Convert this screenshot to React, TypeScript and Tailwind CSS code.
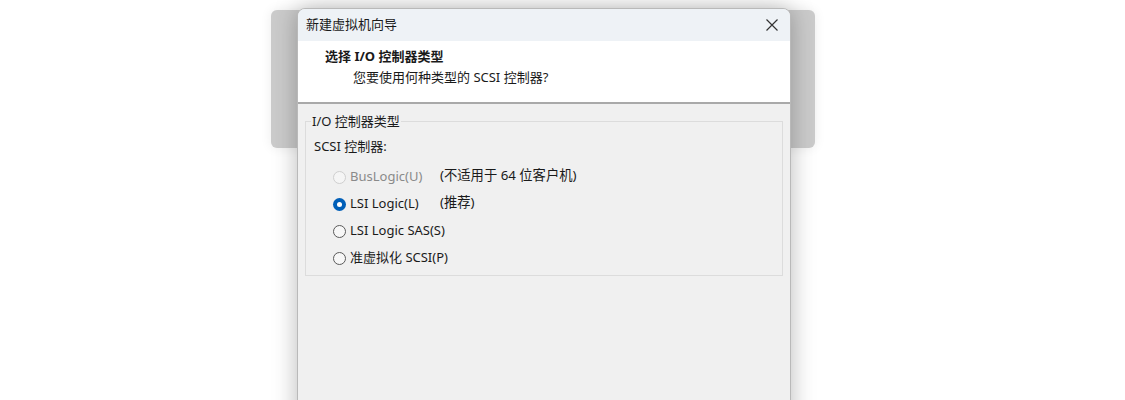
import React from "react";

const font = { fontFamily: '"Segoe UI", "Noto Sans", "Noto Sans CJK SC", sans-serif' };

function Radio({ checked, disabled }: { checked?: boolean; disabled?: boolean }) {
  if (checked) {
    return (
      <span className="w-[13px] h-[13px] rounded-full bg-[#005fb8] flex items-center justify-center shrink-0">
        <span className="w-[5px] h-[5px] rounded-full bg-white" />
      </span>
    );
  }
  return (
    <span
      className={
        "w-[13px] h-[13px] rounded-full border shrink-0 " +
        (disabled ? "border-[#cfcfcf] bg-[#f5f5f5]" : "border-[#5a5a5a] bg-[#f7f7f7]")
      }
    />
  );
}

export default function App() {
  return (
    <div className="relative w-[1125px] h-[400px] bg-white overflow-hidden text-[13px] text-[#1a1a1a]" style={font}>
      {/* background window */}
      <div className="absolute left-[271px] top-[10px] w-[544px] h-[138px] rounded-[6px] bg-[#cbcbcb] shadow-[0_0_12px_rgba(0,0,0,0.08)]" />
      {/* dialog */}
      <div className="absolute left-[297px] top-[8px] w-[494px] h-[420px] rounded-t-[8px] border border-[#b9b9b9] bg-[#f0f0f0] shadow-[0_0_24px_rgba(0,0,0,0.28)] flex flex-col overflow-hidden">
        <div className="h-[32px] bg-[#eef2f6] flex items-center justify-between pl-[8px] pr-[10px] shrink-0">
          <span className="text-[13px] text-[#1a1a1a]">新建虚拟机向导</span>
          <svg width="14" height="14" viewBox="0 0 14 14" className="mr-[1px]">
            <path d="M1.5 1.5 L12.5 12.5 M12.5 1.5 L1.5 12.5" stroke="#333" strokeWidth="1.2" />
          </svg>
        </div>
        <div className="h-[63px] bg-white border-b-2 border-[#a9a9a9] shrink-0 pt-[6px]">
          <div className="pl-[27px] text-[13px] font-bold leading-[18px]">选择 I/O 控制器类型</div>
          <div className="pl-[55px] text-[13px] leading-[18px] mt-[3px]">您要使用何种类型的 SCSI 控制器?</div>
        </div>
        <div className="px-[7px] pt-[17px]">
          <div className="relative w-[478px] h-[155px] border border-[#dcdcdc]">
            <span className="absolute left-[5px] -top-[10px] bg-[#f0f0f0] px-[1px] leading-[18px]">I/O 控制器类型</span>
            <div className="pl-[8px] pt-[15px] leading-[18px]">SCSI 控制器:</div>
            <div className="pl-[27px] pt-[13px] flex flex-col gap-[9px] text-[13px]">
              <div className="flex items-center h-[18px]">
                <Radio disabled />
                <span className="ml-[4px] w-[90px] text-[#8a8a8a]">BusLogic(U)</span>
                <span className="-mt-[3px] text-[13.3px]">(不适用于 64 位客户机)</span>
              </div>
              <div className="flex items-center h-[18px]">
                <Radio checked />
                <span className="ml-[4px] w-[90px]">LSI Logic(L)</span>
                <span className="-mt-[3px] text-[13.3px]">(推荐)</span>
              </div>
              <div className="flex items-center h-[18px]">
                <Radio />
                <span className="ml-[4px]">LSI Logic SAS(S)</span>
              </div>
              <div className="flex items-center h-[18px]">
                <Radio />
                <span className="ml-[4px]">准虚拟化 SCSI(P)</span>
              </div>
            </div>
          </div>
        </div>
      </div>
    </div>
  );
}
